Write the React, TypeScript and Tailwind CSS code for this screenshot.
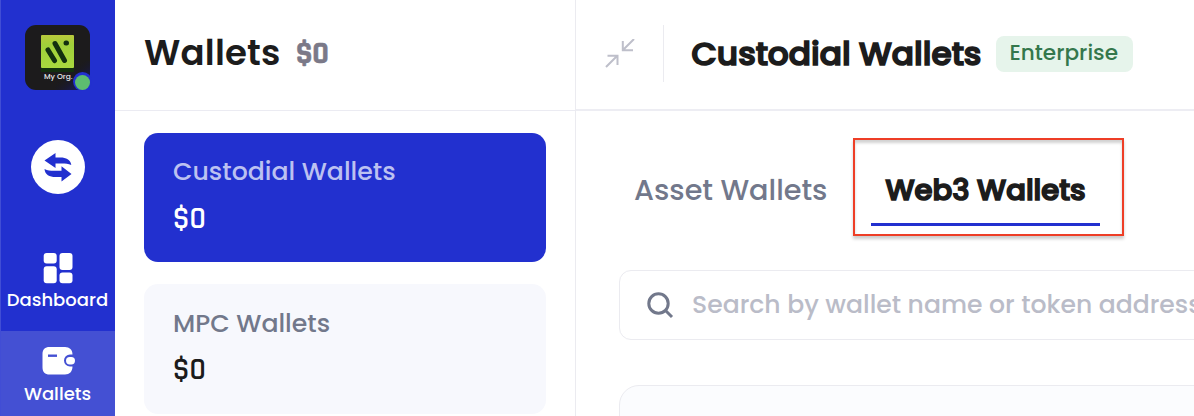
import type { ReactNode } from "react";

function NavItem({ label, active, children }: { label: string; active?: boolean; children: ReactNode }) {
  return (
    <a
      className={
        active
          ? "flex h-[85px] flex-col items-center bg-[#4450d3] pr-px pt-4 text-white"
          : "flex h-[94px] flex-col items-center pr-px pt-4 text-white"
      }
    >
      {children}
      <span className="mt-1.5 whitespace-nowrap text-[18px] font-medium leading-[22px]">{label}</span>
    </a>
  );
}

function OrgLogo() {
  return (
    <div className="relative -ml-px mt-[25px] h-[65px] w-[65px]">
      <svg viewBox="0 0 65 65" className="h-full w-full rounded-[11px] bg-[#1c1b1c]">
        <defs>
          <linearGradient id="shade" x1="0" y1="0" x2="1" y2="1">
            <stop offset="0.4" stopColor="#141428" stopOpacity="0" />
            <stop offset="1" stopColor="#1719a0" />
          </linearGradient>
          <linearGradient id="leaf" x1="0" y1="0" x2="0" y2="1">
            <stop offset="0" stopColor="#b9c93c" />
            <stop offset="0.3" stopColor="#9fd03a" />
            <stop offset="1" stopColor="#a9d83f" />
          </linearGradient>
        </defs>
        <rect x="30" y="36" width="35" height="29" fill="url(#shade)" />
        <rect x="16" y="10" width="33" height="33" rx="1" fill="url(#leaf)" />
        <rect x="16" y="43" width="33" height="4" fill="#13300f" />
        <g stroke="#12300f" strokeWidth="5" strokeLinecap="round">
          <path d="M23 25 29.500 35.500" />
          <path d="M30 18.500 39.500 35.500" />
          <path d="M41 18h.500" />
        </g>
      </svg>
      <span className="absolute left-[19px] top-[47px] whitespace-nowrap text-[7.5px] font-medium leading-[10px] text-[#e8e8ea]">
        My Org.
      </span>
      <span className="absolute left-[48px] top-[47px] h-[19px] w-[19px] rounded-full bg-[#2230cf]" />
      <span className="absolute left-[50px] top-[50px] h-[15px] w-[15px] rounded-full bg-[#5dbd70]" />
    </div>
  );
}

function Sidebar() {
  return (
    <nav className="flex w-[115px] shrink-0 flex-col border-l border-[#414dd5] bg-[#2230cf]">
      <div className="flex h-[237px] flex-col items-center">
        <OrgLogo />
        <div className="mt-[50px] flex h-[54px] w-[54px] items-center justify-center rounded-full bg-white">
          <svg viewBox="0 0 54 54" className="h-[54px] w-[54px] fill-[#2230cf]">
            <path d="M13.500 20.500 24.500 13v4.500h5c5.500 0 10 2 10.800 7.500-3-1.300-6-1.500-9-1.500h-6.800v4.500z" />
            <path d="M40.500 34 30.500 41.500v-4.500h-6c-6 0-10.500-2.300-11-8 3 1.500 6 1.800 9 1.800h8v-4.500z" />
          </svg>
        </div>
      </div>
      <NavItem label="Dashboard">
        <svg viewBox="0 0 30 30" className="h-[30px] w-[30px] overflow-visible fill-white">
          <rect x="0.700" y="0" width="13" height="10.500" rx="3" />
          <rect x="16.500" y="0" width="13" height="17" rx="3" />
          <rect x="0.700" y="13.300" width="13" height="17" rx="3" />
          <rect x="16.500" y="19.500" width="13" height="10.800" rx="3" />
        </svg>
      </NavItem>
      <NavItem label="Wallets" active>
        <svg viewBox="0 0 33 30" className="ml-px h-[30px] w-[33px]">
          <path
            d="M7.500 0h15.500c4.500 0 7.500 2.800 7.500 7.500h-2.500a6 6 0 0 0 0 12h2.500c0 5-3 8-7.500 8H7.500C3 27.500.500 25 .500 20.500V7C.500 2.500 3 0 7.500 0z"
            fill="white"
          />
          <rect x="24" y="10" width="9" height="7.400" rx="3.700" fill="white" />
          <path d="M6 8.700h9" stroke="#4450d3" strokeWidth="2.400" />
        </svg>
      </NavItem>
    </nav>
  );
}

function WalletCard({ name, active }: { name: string; active?: boolean }) {
  return (
    <div
      className={
        active
          ? "h-[129px] shrink-0 rounded-[14px] bg-[#2230cf] pl-[29px] pt-[23px] text-white"
          : "h-[130px] shrink-0 rounded-[14px] bg-[#f7f8fd] pl-[29px] pt-[24px] text-[#1c1c1c]"
      }
    >
      <div
        className={
          active
            ? "whitespace-nowrap text-[25.2px] font-medium leading-8 text-[#bcc1f1]"
            : "whitespace-nowrap text-[25.2px] font-medium leading-8 text-[#72788b]"
        }
      >
        {name}
      </div>
      <div
        className={
          active
            ? "mt-[15px] font-['Rajdhani','Roboto',sans-serif] text-[31px] font-semibold leading-8 tracking-[0.4px]"
            : "mt-[14px] font-['Rajdhani','Roboto',sans-serif] text-[31px] font-semibold leading-8 tracking-[0.4px]"
        }
      >
        $0
      </div>
    </div>
  );
}

function WalletList() {
  return (
    <section className="flex w-[460px] shrink-0 flex-col">
      <header className="flex h-[111px] shrink-0 items-center border-b border-[#ebebf2] pb-[5px] pl-[29px]">
        <h1 className="w-[152px] whitespace-nowrap text-[35.5px] font-semibold leading-10 tracking-[0.2px] text-[#1c1c1c]">
          Wallets
        </h1>
        <span className="mt-0.5 font-['Rajdhani','Roboto',sans-serif] text-[31px] font-bold leading-10 text-[#7b7988] [-webkit-text-stroke:0.5px_#7b7988]">
          $0
        </span>
      </header>
      <div className="flex flex-col gap-[22px] pl-[29px] pr-[29px] pt-[22px]">
        <WalletCard name="Custodial Wallets" active />
        <WalletCard name="MPC Wallets" />
      </div>
    </section>
  );
}

function Details() {
  return (
    <main className="min-w-0 flex-1 border-l border-[#ebebf0]">
      <header className="flex h-[111px] items-center border-b-2 border-[#ededf3] pb-px">
        <svg
          viewBox="0 0 30 30"
          className="ml-[29px] h-[30px] w-[30px] shrink-0 fill-none stroke-[#bebfca]"
          strokeWidth="2"
        >
          <path d="M29 0 18 11M17.800 2v9.200H28" />
          <path d="M1 28 12 17M2.500 16.700H12.500V26" />
        </svg>
        <div className="mb-px ml-[28px] h-[57px] w-px shrink-0 bg-[#ebebf0]" />
        <h2 className="ml-[27.5px] w-[304.5px] shrink-0 whitespace-nowrap text-[32.8px] font-medium leading-10 text-[#1c1c1c] [-webkit-text-stroke:1.7px_#1c1c1c]">
          Custodial Wallets
        </h2>
        <span className="flex h-9 w-[137px] shrink-0 items-center whitespace-nowrap rounded-lg bg-[#e6f4eb] pb-px pl-[13.5px] text-[21.6px] font-medium text-[#34774c]">
          Enterprise
        </span>
      </header>
      <div className="flex h-[159px] pl-[58px] pt-[27px]">
        <div className="w-[219px] whitespace-nowrap pt-[32px] text-[28.7px] font-medium leading-10 text-[#72788b]">
          Asset Wallets
        </div>
        <div className="h-[98px] w-[271px] border-2 border-[#ee3e26] px-4 pt-[30px] shadow-[0_3px_3px_rgba(0,0,0,0.2),inset_0_3px_3px_rgba(0,0,0,0.18)]">
          <div className="h-[56px] w-[229px] whitespace-nowrap border-b-[3px] border-[#2230cf] pl-[14.5px] text-[29.1px] font-medium leading-10 text-[#1c1c1c] [-webkit-text-stroke:1.7px_#1c1c1c]">
            Web3 Wallets
          </div>
        </div>
      </div>
      <div className="ml-[43px] flex h-[70px] w-[700px] items-center rounded-xl border border-[#ebebf0] pl-[27px]">
        <svg viewBox="0 0 27 27" className="h-[27px] w-[27px] shrink-0 fill-none stroke-[#72788b]" strokeWidth="3">
          <circle cx="11.500" cy="11.500" r="9.700" />
          <path d="m18 18 7 7" />
        </svg>
        <span className="ml-[18px] whitespace-nowrap text-[25.1px] font-medium leading-8 text-[#babcc8]">
          Search by wallet name or token address
        </span>
      </div>
      <div className="ml-[43px] mt-[45px] h-[120px] w-[700px] rounded-t-[20px] border border-[#ebebf0] bg-[#fbfcfe]" />
    </main>
  );
}

export default function App() {
  return (
    <div className="flex h-[416px] w-[1194px] overflow-hidden bg-white font-['Poppins','Inter',sans-serif]">
      <Sidebar />
      <WalletList />
      <Details />
    </div>
  );
}
